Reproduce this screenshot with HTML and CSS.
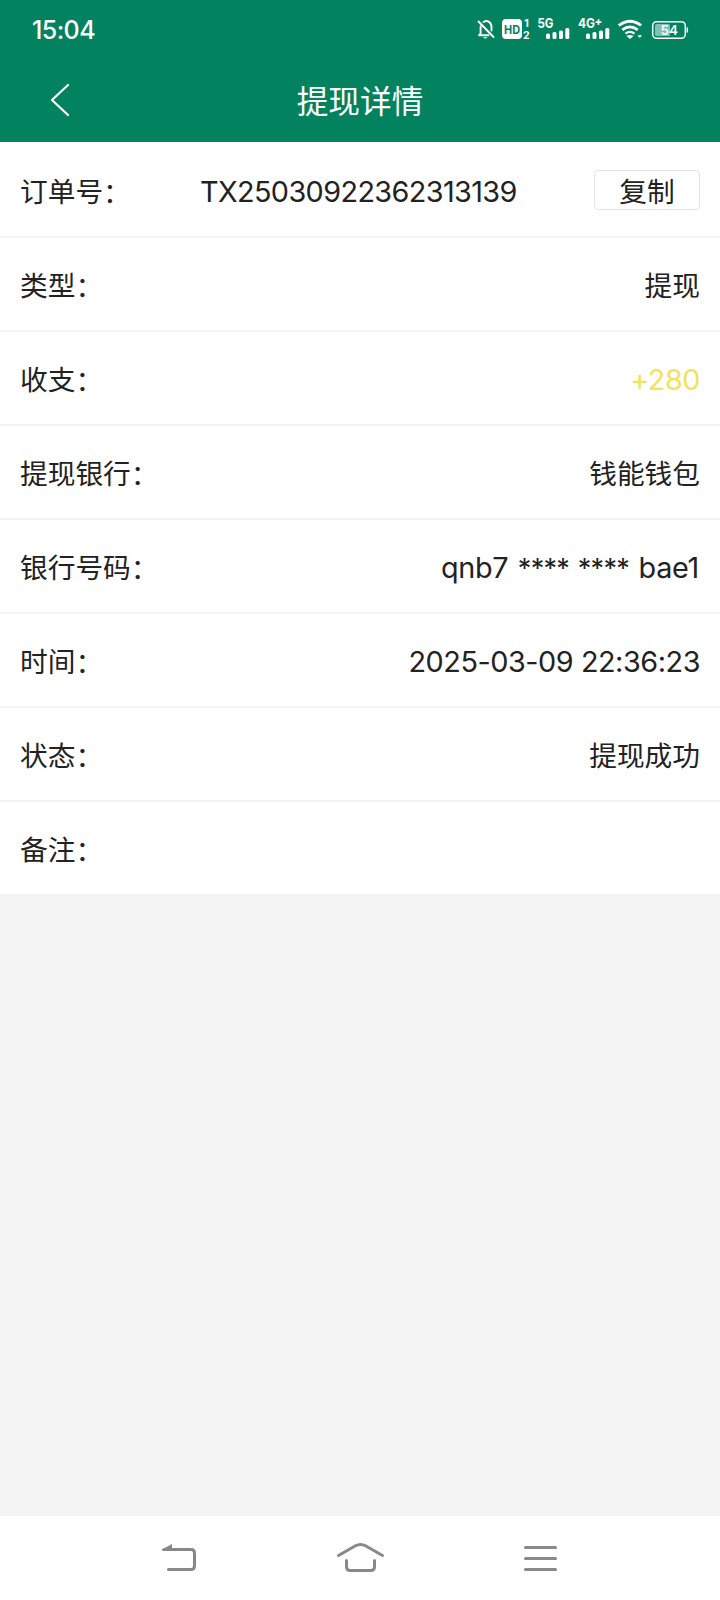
FILE: index.html
```html
<!DOCTYPE html>
<html lang="zh-CN">
<head>
<meta charset="utf-8">
<title>提现详情</title>
<link rel="stylesheet" href="styles.css">
</head>
<body>
<div class="screen">
  <header class="header">
    <div class="statusbar">
      <span class="clock">15:04</span>
      <svg class="status-icons" width="220" height="40" viewBox="470 10 220 40">
        <g fill="none" stroke="#fff" stroke-width="1.9" stroke-linecap="round" stroke-linejoin="round">
          <path d="M478.500 21.500L493.500 37M480.600 26.500V33.300L479 35.300H488.500M483.500 22C487.500 19.500 491.500 22.500 491.500 27V30.500"/>
        </g>
        <path fill="#fff" d="M483 37.200h4.600q-2.300 2.600-4.600 0z"/>
        <rect x="502" y="19" width="20" height="20" rx="4" fill="#fff"/>
        <text x="504" y="33.500" class="glyph hd" textLength="16" lengthAdjust="spacingAndGlyphs">HD</text>
        <text x="524.300" y="27" class="glyph sim">1</text>
        <text x="523" y="38.500" class="glyph sim">2</text>
        <text x="537.500" y="28.300" class="glyph net" textLength="16" lengthAdjust="spacingAndGlyphs">5G</text>
        <text x="578" y="28.300" class="glyph net" textLength="17" lengthAdjust="spacingAndGlyphs">4G</text>
        <path d="M598.500 19.300v5.600M595.700 22.100h5.600" stroke="#fff" stroke-width="1.700"/>
        <g fill="#fff">
          <rect x="546" y="33.500" width="4" height="5.500" rx="1.500"/>
          <rect x="552.500" y="32" width="4" height="7" rx="1.500"/>
          <rect x="559" y="30.500" width="4" height="8.500" rx="1.500"/>
          <rect x="565.300" y="28" width="4" height="11" rx="1.500"/>
          <rect x="586" y="33.500" width="4" height="5.500" rx="1.500"/>
          <rect x="592.500" y="32" width="4" height="7" rx="1.500"/>
          <rect x="599" y="30.500" width="4" height="8.500" rx="1.500"/>
          <rect x="605.300" y="28" width="4" height="11" rx="1.500"/>
          <path d="M626.500 36L630 39L633.500 36Q630 34 626.500 36z"/>
          <path d="M637.500 35.300h4.500l-2.250 2.700z"/>
        </g>
        <g fill="none" stroke="#fff" stroke-width="2.800">
          <path d="M618.800 25.500Q630 17 641.200 25.500"/>
          <path d="M622.300 29.800Q630 24 637.700 29.800"/>
          <path d="M625.500 33.600Q630 30.300 634.500 33.600" stroke-width="2.200"/>
        </g>
        <rect x="652.700" y="21.700" width="32.600" height="16.600" rx="4" fill="none" stroke="#fff" stroke-width="1.500"/>
        <rect x="655" y="24" width="15" height="12" rx="1.500" fill="#fff" opacity=".5"/>
        <path d="M687.300 27.500v5" stroke="#fff" stroke-width="1.500"/>
        <text x="660.500" y="35.300" class="glyph battery" textLength="17.500" lengthAdjust="spacingAndGlyphs">54</text>
      </svg>
    </div>
    <div class="titlebar">
      <svg class="back" width="20" height="34" viewBox="0 0 20 34"><path d="M18 2L2 17L18 32" fill="none" stroke="#fff" stroke-width="2.200" stroke-linecap="round" stroke-linejoin="round"/></svg>
      <h1 class="title">提现详情</h1>
    </div>
  </header>
  <main class="details">
    <div class="row row-first">
      <span class="label">订单号<span class="colon">：</span></span>
      <span class="value order">TX25030922362313139</span>
      <button class="copy">复制</button>
    </div>
    <div class="row"><span class="label">类型<span class="colon">：</span></span><span class="value">提现</span></div>
    <div class="row"><span class="label">收支<span class="colon">：</span></span><span class="value amount">+280</span></div>
    <div class="row"><span class="label">提现银行<span class="colon">：</span></span><span class="value">钱能钱包</span></div>
    <div class="row"><span class="label">银行号码<span class="colon">：</span></span><span class="value account">qnb7 <span class="mask">**** ****</span> bae1</span></div>
    <div class="row"><span class="label">时间<span class="colon">：</span></span><span class="value time">2025-03-09 22:36:23</span></div>
    <div class="row"><span class="label">状态<span class="colon">：</span></span><span class="value">提现成功</span></div>
    <div class="row row-last"><span class="label">备注<span class="colon">：</span></span></div>
  </main>
  <nav class="navbar">
    <svg width="720" height="84" viewBox="0 1516 720 84" fill="none" stroke="#888" stroke-width="3" stroke-linecap="round" stroke-linejoin="round">
      <path d="M168.500 1569.500H191Q194.500 1569.500 194.500 1566V1553Q194.500 1549.500 191 1549.500H164"/>
      <path d="M162 1550.500V1549.500L172 1544V1550.500z" fill="#888" stroke="none"/>
      <path d="M338.500 1555.500L355.500 1545.800Q360.500 1543 365.500 1545.800L382.500 1555.500M346.500 1560.500V1566.500Q346.500 1570.500 350.500 1570.500H370.500Q374.500 1570.500 374.500 1566.500V1560.500"/>
      <path d="M525.500 1547.500H555.500M525.500 1558.500H555.500M525.500 1569.500H555.500"/>
    </svg>
  </nav>
</div>
</body>
</html>
```
FILE: styles.css
```css
* { box-sizing: border-box; }
body {
  margin: 0;
  font-family: Inter, "Noto Sans CJK SC", sans-serif;
  color: #222;
}
.screen {
  width: 720px;
  height: 1600px;
  display: flex;
  flex-direction: column;
  background: #f3f3f3;
}
.header {
  height: 142px;
  background: #02825f;
  color: #fff;
}
.statusbar {
  height: 60px;
  padding: 0 30px 0 32px;
  display: flex;
  align-items: center;
  justify-content: space-between;
}
.clock {
  font-size: 25px;
  font-weight: 500;
  letter-spacing: -0.6px;
}
.glyph { fill: #fff; font-family: Inter, sans-serif; font-weight: 700; }
.glyph.hd { fill: #02825f; font-size: 12px; }
.sim { font-size: 10.500px; }
.net { font-size: 13px; }
.battery { font-size: 13.500px; font-weight: 600; }
.titlebar {
  height: 80px;
  padding: 0 50px;
  display: grid;
  grid-template-columns: 20px 1fr 20px;
  align-items: center;
}
.title {
  margin: 0;
  padding-top: 3px;
  font-size: 31.700px;
  line-height: 48px;
  font-weight: 400;
  text-align: center;
}
.details { background: #fff; }
.row {
  height: 94px;
  padding: 3px 20px 0;
  display: flex;
  align-items: center;
  justify-content: space-between;
  border-bottom: 2px solid #f3f3f3;
  font-size: 28px;
  line-height: 40px;
  white-space: nowrap;
}
.row-first { height: 96px; padding-top: 2px; }
.row-first .label, .row-first .value { padding-top: 3px; }
.row-last { height: 92px; border-bottom: 0; }
.label, .value { font-size: 27.700px; }
.colon { line-height: 1; vertical-align: -1px; }
.order, .amount, .account, .time { font-size: 28.800px; }
.order { margin-left: -8px; letter-spacing: -0.600px; }
.amount { color: #f2e35a; letter-spacing: -0.450px; }
.account { margin-right: 1px; padding-top: 2px; letter-spacing: -0.300px; word-spacing: 1.700px; }
.mask { font-size: 27px; letter-spacing: -0.700px; }
.time { letter-spacing: -0.450px; }
.copy {
  width: 106px;
  height: 40px;
  padding: 2px 0 0;
  border: 1px solid #e3e3e3;
  border-radius: 4px;
  background: #fff;
  color: #222;
  font: 27.700px/38px Inter, "Noto Sans CJK SC", sans-serif;
}
.navbar {
  height: 84px;
  margin-top: auto;
  background: #fff;
}
.navbar svg { display: block; }
```
